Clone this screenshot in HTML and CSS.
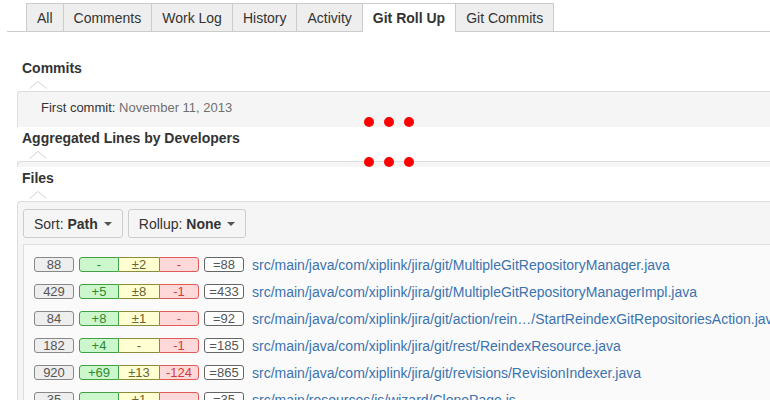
FILE: index.html
```html
<!DOCTYPE html>
<html>
<head>
<meta charset="utf-8">
<title>Git Roll Up</title>
<link rel="stylesheet" href="styles.css">
</head>
<body>
<div class="page">
  <nav class="tabs">
    <a class="tab">All</a>
    <a class="tab">Comments</a>
    <a class="tab">Work Log</a>
    <a class="tab">History</a>
    <a class="tab">Activity</a>
    <a class="tab active">Git Roll Up</a>
    <a class="tab">Git Commits</a>
  </nav>

  <div class="content">
    <section class="mod">
      <h3 class="mod-title">Commits</h3>
      <svg class="notch" viewBox="0 0 18 8" width="18" height="8"><polyline points="0.5,7.5 9,0.5 17.5,7.5" fill="none" stroke="#d4d4d4" stroke-width="1"/></svg>
      <div class="mod-body commits">
        <span class="label">First commit:</span> <span class="date">November 11, 2013</span>
      </div>
    </section>

    <section class="mod">
      <h3 class="mod-title">Aggregated Lines by Developers</h3>
      <svg class="notch" viewBox="0 0 18 8" width="18" height="8"><polyline points="0.5,7.5 9,0.5 17.5,7.5" fill="none" stroke="#d4d4d4" stroke-width="1"/></svg>
      <div class="mod-body empty"></div>
    </section>

    <section class="mod">
      <h3 class="mod-title">Files</h3>
      <svg class="notch" viewBox="0 0 18 8" width="18" height="8"><polyline points="0.5,7.5 9,0.5 17.5,7.5" fill="none" stroke="#d4d4d4" stroke-width="1"/></svg>
      <div class="mod-body files">
        <div class="toolbar">
          <button class="btn">Sort: <b>Path</b><span class="caret"></span></button>
          <button class="btn">Rollup: <b>None</b><span class="caret"></span></button>
        </div>
        <div class="file-list">
          <div class="row">
            <span class="num">88</span>
            <span class="diff"><span class="add">-</span><span class="mod-c">±2</span><span class="del">-</span></span>
            <span class="eq">=88</span>
            <a class="path">src/main/java/com/xiplink/jira/git/MultipleGitRepositoryManager.java</a>
          </div>
          <div class="row">
            <span class="num">429</span>
            <span class="diff"><span class="add">+5</span><span class="mod-c">±8</span><span class="del">-1</span></span>
            <span class="eq">=433</span>
            <a class="path">src/main/java/com/xiplink/jira/git/MultipleGitRepositoryManagerImpl.java</a>
          </div>
          <div class="row">
            <span class="num">84</span>
            <span class="diff"><span class="add">+8</span><span class="mod-c">±1</span><span class="del">-</span></span>
            <span class="eq">=92</span>
            <a class="path">src/main/java/com/xiplink/jira/git/action/rein…/StartReindexGitRepositoriesAction.java</a>
          </div>
          <div class="row">
            <span class="num">182</span>
            <span class="diff"><span class="add">+4</span><span class="mod-c">-</span><span class="del">-1</span></span>
            <span class="eq">=185</span>
            <a class="path">src/main/java/com/xiplink/jira/git/rest/ReindexResource.java</a>
          </div>
          <div class="row">
            <span class="num">920</span>
            <span class="diff"><span class="add">+69</span><span class="mod-c">±13</span><span class="del">-124</span></span>
            <span class="eq">=865</span>
            <a class="path">src/main/java/com/xiplink/jira/git/revisions/RevisionIndexer.java</a>
          </div>
          <div class="row">
            <span class="num">35</span>
            <span class="diff"><span class="add">-</span><span class="mod-c">±1</span><span class="del">-</span></span>
            <span class="eq">=35</span>
            <a class="path">src/main/resources/js/wizard/ClonePage.js</a>
          </div>
        </div>
      </div>
    </section>
  </div>

  <div class="dots dots-top"><span></span><span></span><span></span></div>
  <div class="dots dots-bottom"><span></span><span></span><span></span></div>
</div>
</body>
</html>
```

FILE: styles.css
```css
html, body {
  margin: 0;
  padding: 0;
  overflow: hidden;
  background: #fff;
}

body {
  font-family: "Liberation Sans", Arial, sans-serif;
  font-size: 14px;
  color: #333;
}

.page {
  position: relative;
  width: 960px;
  padding-top: 3px;
}

/* Tabs */
.tabs {
  display: flex;
  align-items: flex-end;
  margin-left: 7px;
  padding-left: 20px;
  border-bottom: 1px solid #ccc;
}

.tab {
  display: block;
  padding: 6px 10px 4px;
  line-height: 17px;
  border: 1px solid #ccc;
  border-bottom: none;
  margin-left: -1px;
  background: #eee;
  color: #333;
  text-decoration: none;
}

.tab.active {
  background: #fff;
  font-weight: bold;
  padding-bottom: 5px;
  margin-bottom: -1px;
}

/* Modules */
.content {
  margin-left: 17px;
  padding-top: 25px;
}

.mod-title {
  margin: 0;
  padding-left: 5px;
  font-size: 14px;
  font-weight: bold;
  line-height: 22px;
  color: #333;
}

.notch {
  display: block;
  margin: 2px 0 2px 12px;
}

.mod-body {
  background: #f5f5f5;
  border-top: 1px solid #ddd;
  border-left: 1px solid #ddd;
  border-top-left-radius: 3px;
}

.commits {
  padding: 7px 0 11px 23px;
  font-size: 13px;
  line-height: 17px;
}

.commits .label {
  color: #333;
}

.commits .date {
  color: #707070;
}

.empty {
  height: 5px;
}

.files {
  padding: 7px 0 0 5px;
}

.toolbar {
  display: flex;
  gap: 5px;
  margin-bottom: 6px;
}

.btn {
  display: flex;
  align-items: center;
  height: 29px;
  box-sizing: border-box;
  padding: 0 10px;
  border: 1px solid #ccc;
  border-radius: 3px;
  background: #f5f5f5;
  font-family: "Liberation Sans", Arial, sans-serif;
  font-size: 14px;
  color: #333;
  white-space: pre;
}

.btn b {
  font-weight: bold;
}

.caret {
  display: inline-block;
  width: 0;
  height: 0;
  margin-left: 6px;
  border-left: 4px solid transparent;
  border-right: 4px solid transparent;
  border-top: 4px solid #555;
}

.file-list {
  background: #fafafa;
  border-top: 1px solid #ddd;
  border-left: 1px solid #ddd;
  padding: 6px 0 0 10px;
  height: 200px;
}

.row {
  display: flex;
  align-items: center;
  height: 27px;
  white-space: nowrap;
}

.num, .eq, .diff span {
  display: block;
  box-sizing: border-box;
  width: 40px;
  height: 15px;
  line-height: 13px;
  font-size: 13px;
  text-align: center;
  border: 1px solid;
}

.num {
  background: #eee;
  border-color: #888;
  color: #555;
  border-radius: 3px;
}

.diff {
  display: flex;
  margin-left: 5px;
}

.diff .add {
  background: #ccf7cc;
  border-color: #44a044;
  color: #2e8b2e;
  border-radius: 3px 0 0 3px;
}

.diff .mod-c {
  background: #ffffd2;
  border-color: #8c8c3c;
  color: #66662e;
  border-left: none;
  border-right: none;
}

.diff .del {
  background: #ffd9d9;
  border-color: #e05a5a;
  color: #d23c3c;
  border-radius: 0 3px 3px 0;
}

.eq {
  margin-left: 5px;
  background: #fff;
  border-color: #666;
  color: #555;
  border-radius: 3px;
}

.path {
  margin-left: 8px;
  color: #3b73af;
  text-decoration: none;
  font-size: 14px;
}

/* Loading dots overlay */
.dots {
  position: absolute;
  left: 364px;
  display: flex;
  gap: 10px;
}

.dots span {
  width: 10px;
  height: 10px;
  border-radius: 50%;
  background: #f00;
}

.dots-top {
  top: 117px;
}

.dots-bottom {
  top: 157px;
}
```
